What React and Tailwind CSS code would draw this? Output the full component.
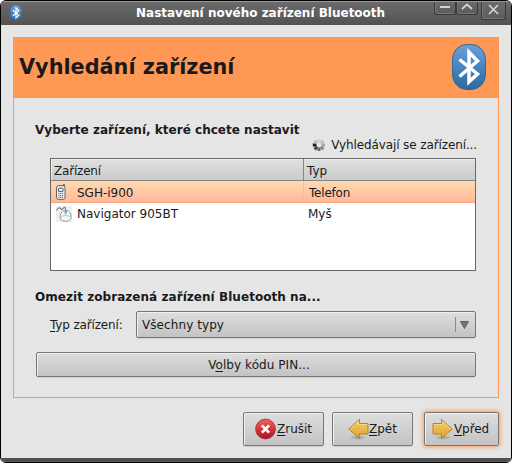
import React from "react";

const FACE = "border border-[#777] rounded-[2px] bg-linear-to-b from-[#dedede] to-[#c3c3c3] shadow-[inset_1px_1px_0_#efefef,0_1px_0_#cfcfcf]";

function BluetoothLogo({ className }) {
  return (
    <svg className={className} viewBox="0 0 34 47">
      <defs>
        <linearGradient id="bt" x1="0" y1="0" x2="0" y2="1">
          <stop offset="0" stopColor="#6d9fd8" />
          <stop offset="0.5" stopColor="#4686c0" />
          <stop offset="1" stopColor="#2a6a9e" />
        </linearGradient>
      </defs>
      <rect x="0.5" y="0.5" width="33" height="45" rx="14" ry="15" fill="url(#bt)" stroke="#3a6792" />
      <path d="M7.500 15.500L25.500 30l-8.500 7.700V8.300L25.500 17 7.500 32.500" fill="none" stroke="#fff" strokeWidth="3.500" strokeLinejoin="miter" />
    </svg>
  );
}

function PhoneIcon() {
  return (
    <svg className="h-4 w-4 shrink-0" viewBox="0 0 16 16">
      <path d="M8.2 2V.6h1.3v2" fill="#ddd" stroke="#555753" strokeWidth=".9" />
      <rect x="1.500" y="1.600" width="8.500" height="13.800" rx="2" fill="#eeefeb" stroke="#555753" strokeWidth=".9" />
      <rect x="3.500" y="4.200" width="4.500" height="3.400" rx=".5" fill="#e8f2f6" stroke="#43484a" strokeWidth=".9" />
      <path d="M3.300 9.700h5M3.300 11.600h5M3.300 13.400h5" stroke="#6b6e69" strokeWidth="1" strokeDasharray="1.2 .6" />
    </svg>
  );
}

function MouseIcon() {
  return (
    <svg className="h-4 w-4 shrink-0" viewBox="0 0 16 16">
      <rect width="16" height="16" fill="#efefef" />
      <path d="M.5 4.500C1.800 2 3.500 1.200 4.600 2.700S6.800 3 8 1.500c1-.9 1.500.8 1.700 3.600" fill="none" stroke="#777b78" strokeWidth="1.100" />
      <path d="M9.700 4.500c3.300 0 5.300 2.500 5.300 6 0 3.500-1.500 4.800-5.300 4.800s-5.500-1.300-5.500-4.800 2.200-6 5.500-6z" fill="#f6f6f4" stroke="#8b8e89" strokeWidth=".9" />
      <path d="M4.500 10.500q5.200-2 10.300 0" fill="none" stroke="#b4b6b1" strokeWidth=".8" />
      <path d="M8.200 4.500h3q.3 3-1.500 4.400-1.800-1.400-1.500-4.400z" fill="#82add9" />
    </svg>
  );
}

function Spinner() {
  return (
    <svg className="h-[14px] w-[14px] shrink-0" viewBox="-7 -7 14 14" strokeWidth="3">
      <path d="M0-2.500V-6" stroke="#d4d4d4" />
      <path d="M1.800-1.800L4.300-4.300" stroke="#c0c0c0" />
      <path d="M2.500 0H6" stroke="#a4a4a4" />
      <path d="M1.800 1.800L4.400 4.400" stroke="#868686" />
      <path d="M0 2.500V6" stroke="#666" />
      <path d="M-1.800 1.800L-4.400 4.400" stroke="#444" />
      <path d="M-2.500 0H-6.200" stroke="#202020" strokeWidth="3.200" />
      <path d="M-1.800-1.800L-4.400-4.400" stroke="#bbb" />
    </svg>
  );
}

function CancelIcon() {
  return (
    <svg className="h-[22px] w-[22px] shrink-0" viewBox="0 0 22 22">
      <defs>
        <linearGradient id="red" x1="0" y1="0" x2="0" y2="1">
          <stop offset="0" stopColor="#f06767" />
          <stop offset=".5" stopColor="#d9343a" />
          <stop offset="1" stopColor="#a80f28" />
        </linearGradient>
      </defs>
      <circle cx="10.500" cy="11" r="9.900" fill="url(#red)" stroke="#a72331" strokeWidth=".8" />
      <path d="M6.900 7.400l7.200 7.200M14.100 7.400l-7.200 7.200" stroke="#fff" strokeWidth="2.700" />
    </svg>
  );
}

function ArrowIcon({ left }) {
  return (
    <svg className={left ? "h-[22px] w-[22px] shrink-0 -scale-x-100" : "h-[22px] w-[22px] shrink-0"} viewBox="0 0 22 22">
      <defs>
        <linearGradient id="gold" x1="0" y1="0" x2="0" y2="1">
          <stop offset="0" stopColor="#f3d06c" />
          <stop offset="1" stopColor="#dfa02c" />
        </linearGradient>
        <radialGradient id="shade">
          <stop offset="0" stopColor="#000" stopOpacity=".25" />
          <stop offset="1" stopColor="#000" stopOpacity="0" />
        </radialGradient>
      </defs>
      <ellipse cx="11" cy="19.500" rx="9" ry="2.500" fill="url(#shade)" />
      <path d="M1 5.500h8.500V1.300L20.200 11 9.500 20.500v-4.500H1z" fill="url(#gold)" stroke="#b78420" strokeLinejoin="round" />
      <path d="M2 6.500H10.500V3.600L18.700 11" fill="none" stroke="#f8df98" strokeWidth=".7" />
    </svg>
  );
}

function Key({ children }) {
  return <span className="underline decoration-1 underline-offset-[2px] [text-decoration-skip-ink:none]">{children}</span>;
}

const WINBTN = "flex justify-center border border-t-0 border-[#393939] rounded-b-[3px] bg-linear-to-b from-[#6b6b6b] to-[#5c5c5c] shadow-[inset_1px_-1px_0_#777]";

export default function App() {
  return (
    <div className="h-[463px] w-[512px] bg-white">
      <div className="flex h-full w-full flex-col overflow-hidden rounded-[6px] border border-black bg-[#e5e5e5] font-['DejaVu_Sans',sans-serif] text-[12px] leading-[14px] whitespace-nowrap text-[#1a1a1a]">
        <header className="flex h-6 shrink-0 items-start border-t border-[#9a9a9a] bg-linear-to-b from-[#6b6b6b] to-[#525252] pl-[9px] pr-[5px]">
          <BluetoothLogo className="mt-[3px] h-4 w-3" />
          <h1 className="ml-[114px] mt-[4px] w-[250px] text-[12px] font-bold text-white">Nastavení nového zařízení Bluetooth</h1>
          <div className="ml-auto flex items-start">
            <div className={`${WINBTN} h-[13px] w-[22px] pt-[4px]`}><div className="h-[2px] w-[10px] bg-[#d3d3d3]" /></div>
            <div className={`${WINBTN} h-[13px] w-[22px] pt-[1px]`}>
              <svg className="h-[7px] w-3" viewBox="0 0 12 7"><path d="M1 6l5-4.500L11 6" fill="none" stroke="#d3d3d3" strokeWidth="1.700" /></svg>
            </div>
            <div className={`${WINBTN} ml-[3px] h-[18px] w-[25px] pt-[2px]`}>
              <svg className="h-[11px] w-[11px]" viewBox="0 0 11 11"><path d="M1 1l9 9M10 1l-9 9" stroke="#d8d8d8" strokeWidth="1.600" /></svg>
            </div>
          </div>
        </header>

        <main className="flex min-h-0 flex-1 flex-col px-3 pt-3">
          <section className="h-[361px] w-[486px] border border-[#ff9755]">
            <div className="flex h-[60px] items-center justify-between bg-[#ff9755] pl-[5px] pr-[12px]">
              <h2 className="-mt-[2px] text-[20.8px] leading-[26px] font-bold">Vyhledání zařízení</h2>
              <BluetoothLogo className="-mt-px h-[47px] w-[34px]" />
            </div>

            <div className="pl-[21px] pt-[25px]">
              <h3 className="font-bold tracking-[0.02px]">Vyberte zařízení, které chcete nastavit</h3>
              <div className="mt-[1px] flex w-[442px] items-center justify-end gap-[5px]">
                <Spinner />
                <span className="tracking-[-0.11px]">Vyhledávají se zařízení...</span>
              </div>

              <div className="ml-[15px] mt-[6px] h-[113px] w-[426px] border border-[#696969] bg-white">
                <div className="flex h-[22px] border-b border-[#858585] bg-linear-to-b from-[#e0e0e0] to-[#cbcbcb] pt-[5px] shadow-[inset_1px_1px_0_#eee]">
                  <div className="-mt-[5px] w-[253px] border-r border-[#858585] pl-[3px] pt-[5px] tracking-[-0.2px]">Zařízení</div>
                  <div className="pl-[3px]">Typ</div>
                </div>
                <div className="flex h-[22px] items-center border-b border-[#f5a582] bg-linear-to-b from-[#ffdab1] to-[#ffb899]">
                  <div className="flex h-full w-[253px] items-center gap-[6px] border-r border-[#f6bf98] pl-[4px]"><PhoneIcon /><span className="pt-[2px]">SGH-i900</span></div>
                  <span className="pl-[5px] pt-[2px] tracking-[-0.2px]">Telefon</span>
                </div>
                <div className="flex h-[21px] items-center">
                  <div className="flex w-[253px] items-center gap-[5px] pl-[5px]"><MouseIcon /><span>Navigator 905BT</span></div>
                  <span className="pl-[4px]">Myš</span>
                </div>
              </div>

              <h3 className="mt-[19px] font-bold tracking-[0.05px]">Omezit zobrazená zařízení Bluetooth na...</h3>
              <div className="mt-[7px] flex items-center pl-[15px]">
                <label className="w-[86px] tracking-[-0.15px]"><Key>T</Key>yp zařízení:</label>
                <div className={`${FACE} flex h-[27px] w-[340px] items-center justify-between pl-[5px] pr-[6px]`}>
                  <span className="tracking-[0.08px]">Všechny typy</span>
                  <div className="flex items-center gap-[4px]">
                    <div className="h-[15px] w-px bg-[#8c8c8c]" />
                    <svg className="h-2 w-[9px]" viewBox="0 0 9 8"><path d="M.5.5h8L4.500 7.500z" fill="#747474" stroke="#444" strokeWidth=".7" /></svg>
                  </div>
                </div>
              </div>
              <button className={`${FACE} ml-px mt-[14px] block h-[25px] w-[440px] pl-[6px] tracking-[0.06px]`}>V<Key>o</Key>lby kódu PIN...</button>
            </div>
          </section>

          <footer className="mt-[14px] flex w-[486px] justify-end">
            <button className={`${FACE} flex h-[34px] w-[81px] items-center pl-[11px]`}><CancelIcon /><span><Key>Z</Key>rušit</span></button>
            <button className={`${FACE} ml-2 flex h-[34px] w-[81px] items-center pl-[14px]`}><ArrowIcon left /><span><Key>Z</Key>pět</span></button>
            <button className="ml-[11px] flex h-[34px] w-[75px] items-center rounded-[2px] border border-[#777] bg-linear-to-b from-[#dedede] to-[#c3c3c3] pl-[7px] shadow-[inset_1px_1px_0_#efefef,0_0_4px_1px_#ff9755]"><ArrowIcon /><span className="tracking-[-0.1px]"><Key>V</Key>před</span></button>
          </footer>
        </main>
        <div className="h-1 shrink-0 bg-[#505050]" />
      </div>
    </div>
  );
}
